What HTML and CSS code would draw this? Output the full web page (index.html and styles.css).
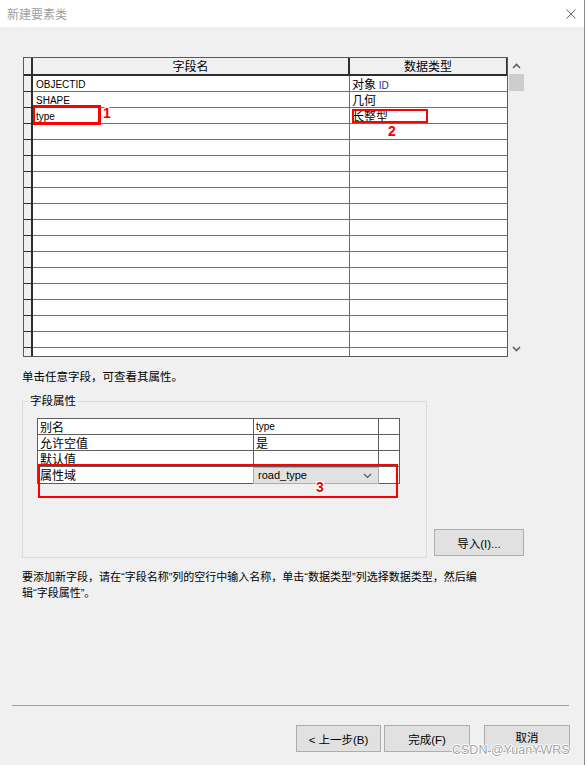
FILE: index.html
```html
<!DOCTYPE html>
<html lang="zh-CN">
<head>
<meta charset="utf-8">
<title>新建要素类</title>
<link rel="stylesheet" href="styles.css">
</head>
<body>
<div class="window">
  <div class="titlebar">
    <span class="title">新建要素类</span>
    <svg class="close" width="10" height="10" viewBox="0 0 10 10"><path d="M0.5 0.5 L9.5 9.5 M9.5 0.5 L0.5 9.5" stroke="#6a6a6a" stroke-width="1" fill="none"/></svg>
  </div>

  <div class="main">
    <div class="grid-wrap">
      <div class="grid">
        <div class="row head"><div class="rh"></div><div class="hc">字段名</div><div class="hc hc2">数据类型</div></div>
        <div class="row"><div class="rh"></div><div class="c">OBJECTID</div><div class="c c2">对象 <span class="lat">ID</span></div></div>
        <div class="row"><div class="rh"></div><div class="c">SHAPE</div><div class="c c2">几何</div></div>
        <div class="row"><div class="rh"></div><div class="c">type</div><div class="c c2">长整型</div></div>
        <div class="row"><div class="rh"></div><div class="c"></div><div class="c c2"></div></div>
        <div class="row"><div class="rh"></div><div class="c"></div><div class="c c2"></div></div>
        <div class="row"><div class="rh"></div><div class="c"></div><div class="c c2"></div></div>
        <div class="row"><div class="rh"></div><div class="c"></div><div class="c c2"></div></div>
        <div class="row"><div class="rh"></div><div class="c"></div><div class="c c2"></div></div>
        <div class="row"><div class="rh"></div><div class="c"></div><div class="c c2"></div></div>
        <div class="row"><div class="rh"></div><div class="c"></div><div class="c c2"></div></div>
        <div class="row"><div class="rh"></div><div class="c"></div><div class="c c2"></div></div>
        <div class="row"><div class="rh"></div><div class="c"></div><div class="c c2"></div></div>
        <div class="row"><div class="rh"></div><div class="c"></div><div class="c c2"></div></div>
        <div class="row"><div class="rh"></div><div class="c"></div><div class="c c2"></div></div>
        <div class="row"><div class="rh"></div><div class="c"></div><div class="c c2"></div></div>
        <div class="row"><div class="rh"></div><div class="c"></div><div class="c c2"></div></div>
        <div class="row"><div class="rh"></div><div class="c"></div><div class="c c2"></div></div>
        <div class="row"><div class="rh"></div><div class="c"></div><div class="c c2"></div></div>
      </div>
      <div class="vscroll">
        <div class="sb-btn"><svg width="9" height="6" viewBox="0 0 9 6"><polyline points="1,5 4.5,1.5 8,5" fill="none" stroke="#606060" stroke-width="1.6"/></svg></div>
        <div class="thumb"></div>
        <div class="sb-space"></div>
        <div class="sb-btn"><svg width="9" height="6" viewBox="0 0 9 6"><polyline points="1,1 4.5,4.5 8,1" fill="none" stroke="#606060" stroke-width="1.6"/></svg></div>
      </div>
    </div>

    <p class="hint">单击任意字段，可查看其属性。</p>

    <div class="props-row">
      <fieldset class="props">
        <legend>字段属性</legend>
        <div class="ptable">
          <div class="prow"><div class="pc">别名</div><div class="pc pv">type</div><div class="pc px"></div></div>
          <div class="prow"><div class="pc">允许空值</div><div class="pc pvc">是</div><div class="pc px"></div></div>
          <div class="prow"><div class="pc">默认值</div><div class="pc"></div><div class="pc px"></div></div>
          <div class="prow last"><div class="pc">属性域</div><div class="pc pcombo"><div class="combo"><span>road_type</span><svg width="9" height="6" viewBox="0 0 9 6"><polyline points="1,1 4.5,4.5 8,1" fill="none" stroke="#555" stroke-width="1.1"/></svg></div></div><div class="pc px"></div></div>
        </div>
      </fieldset>
      <button class="btn import">导入(I)...</button>
    </div>

    <p class="desc">要添加新字段，请在“字段名称”列的空行中输入名称，单击“数据类型”列选择数据类型，然后编<br>辑“字段属性”。</p>
  </div>

  <div class="footer">
    <div class="sep"></div>
    <div class="buttons">
      <button class="btn fbtn prev">&lt; 上一步(B)</button>
      <button class="btn fbtn finish">完成(F)</button>
      <button class="btn fbtn cancel">取消</button>
    </div>
  </div>

  <div class="mark box1"></div>
  <div class="num n1">1</div>
  <div class="mark box2"></div>
  <div class="num n2">2</div>
  <div class="mark box3"></div>
  <div class="num n3">3</div>
  <div class="watermark">CSDN @YuanYWRS</div>
</div>
</body>
</html>
```

FILE: styles.css
```css
* { box-sizing: border-box; }
html, body { margin: 0; padding: 0; background: #fff; }
body {
  font-family: "Liberation Sans", "Noto Sans CJK SC", sans-serif;
  font-size: 11px;
  color: #000;
}
.window {
  position: relative;
  width: 585px;
  height: 765px;
  background: #f0f0f0;
  border-right: 1px solid #8a8a8a;
  display: flex;
  flex-direction: column;
  overflow: hidden;
}
.titlebar {
  height: 27px;
  flex-shrink: 0;
  background: #fff;
  display: flex;
  align-items: center;
  justify-content: space-between;
  padding: 0 8px 0 7px;
}
.title {
  font-family: "Noto Sans CJK SC", sans-serif;
  font-size: 12px;
  color: #a0a0a0;
}
.close { display: block; }

.main { flex: 1; padding: 30px 0 0 22px; }

.grid-wrap { display: flex; margin-left: 1px; }
.grid {
  width: 485px;
  height: 300px;
  border: 1px solid #5a5a5a;
  overflow: hidden;
  background: #fff;
}
.row {
  display: grid;
  grid-template-columns: 9px 317px 1fr;
  height: 16px;
}
.row.head { height: 18px; }
.rh {
  background: #f0f0f0;
  border-right: 2px solid #2e2e2e;
  border-bottom: 1px solid #2e2e2e;
}
.head .rh { border-bottom: 2px solid #2e2e2e; }
.hc {
  background: #f0f0f0;
  border-right: 2px solid #2e2e2e;
  border-bottom: 2px solid #2e2e2e;
  text-align: center;
  font-family: "Noto Sans CJK SC", sans-serif;
  font-size: 12px;
  line-height: 16px;
}
.hc2 { border-right: 1px solid #2e2e2e; }
.c {
  border-right: 1px solid #6e6e6e;
  border-bottom: 1px solid #6e6e6e;
  padding-left: 3px;
  padding-top: 1px;
  font-size: 10px;
  line-height: 15px;
  white-space: nowrap;
  overflow: hidden;
}
.c2 {
  border-right: none;
  padding-left: 2px;
  padding-top: 0;
  font-family: "Noto Sans CJK SC", sans-serif;
  font-size: 12px;
}
.lat { font-family: "Liberation Sans", sans-serif; font-size: 10px; color: #1a2f8a; }

.vscroll {
  width: 17px;
  height: 300px;
  display: flex;
  flex-direction: column;
  align-items: center;
}
.sb-btn {
  width: 17px;
  height: 17px;
  display: flex;
  align-items: center;
  justify-content: center;
}
.thumb { width: 15px; height: 17px; background: #cdcdcd; }
.sb-space { flex: 1; }

.hint {
  margin: 12px 0 0 0;
  font-size: 11.5px;
  line-height: 16px;
}

.props-row {
  display: flex;
  align-items: flex-end;
  margin-top: 8px;
}
.props {
  width: 405px;
  margin: 0;
  padding: 9px 9px 73px 14px;
  border: 1px solid #dcdcdc;
  min-width: 0;
}
.props legend {
  padding: 0 2px;
  margin-left: -9px;
  font-size: 11.5px;
  line-height: 16px;
}
.ptable {
  width: 363px;
  border: 1px solid #5e5e5e;
  background: #fff;
}
.prow {
  display: grid;
  grid-template-columns: 216px 125px 1fr;
  height: 16px;
}
.pc {
  border-right: 1px solid #5e5e5e;
  border-bottom: 1px solid #5e5e5e;
  padding-left: 2px;
  font-family: "Noto Sans CJK SC", sans-serif;
  font-size: 12px;
  line-height: 15px;
  white-space: nowrap;
}
.pc.px { border-right: none; }
.pc.pv { font-family: "Liberation Sans", sans-serif; font-size: 10px; }
.prow.last .pc { border-bottom: none; }
.pcombo { padding: 0; position: relative; }
.combo {
  height: 17px;
  margin: 0 -1px 0 -1px;
  background: #e1e1e1;
  border: 1px solid #adadad;
  display: flex;
  align-items: center;
  justify-content: space-between;
  padding: 0 6px 0 4px;
  font-family: "Liberation Sans", sans-serif;
  font-size: 11px;
}

.btn {
  background: #e1e1e1;
  border: 1px solid #adadad;
  font-family: "Liberation Sans", "Noto Sans CJK SC", sans-serif;
  font-size: 11.5px;
  color: #000;
  height: 27px;
  padding: 0;
}
.import { width: 90px; margin: 0 0 2px 7px; }

.desc {
  margin: 11px 0 0 0;
  font-size: 11px;
  line-height: 16px;
}

.footer { padding: 0 14px 13px 12px; flex-shrink: 0; }
.sep { border-top: 1px solid #a0a0a0; margin: 0 1px 19px 0; }
.buttons { display: flex; justify-content: flex-end; }
.fbtn { width: 86px; }
.prev { width: 85px; margin-right: 3px; }
.finish { margin-right: 14px; }
.cancel { padding-bottom: 3px; }

.mark { position: absolute; border: 2px solid #ff0000; }
.box1 { left: 33px; top: 105px; width: 68px; height: 20px; border-width: 3px 3px 3px 2px; }
.box2 { left: 352px; top: 109px; width: 76px; height: 14px; }
.box3 { left: 38px; top: 464px; width: 360px; height: 34px; }
.num {
  position: absolute;
  font-family: "Liberation Sans", sans-serif;
  font-weight: bold;
  font-size: 14px;
  line-height: 14px;
  color: #ee0000;
  text-shadow: 1px 0 #fff, -1px 0 #fff, 0 1px #fff, 0 -1px #fff, 1px 1px #fff, -1px -1px #fff, 1px -1px #fff, -1px 1px #fff;
}
.n1 { left: 103px; top: 106px; }
.n2 { left: 388px; top: 124px; }
.n3 { left: 316px; top: 480px; }
.watermark {
  position: absolute;
  left: 452px;
  top: 743px;
  font-family: "Liberation Sans", sans-serif;
  font-size: 12.5px;
  line-height: 14px;
  color: #a6a6a6;
  text-shadow: 1px 0 #fff, -1px 0 #fff, 0 1px #fff, 0 -1px #fff;
}
```
